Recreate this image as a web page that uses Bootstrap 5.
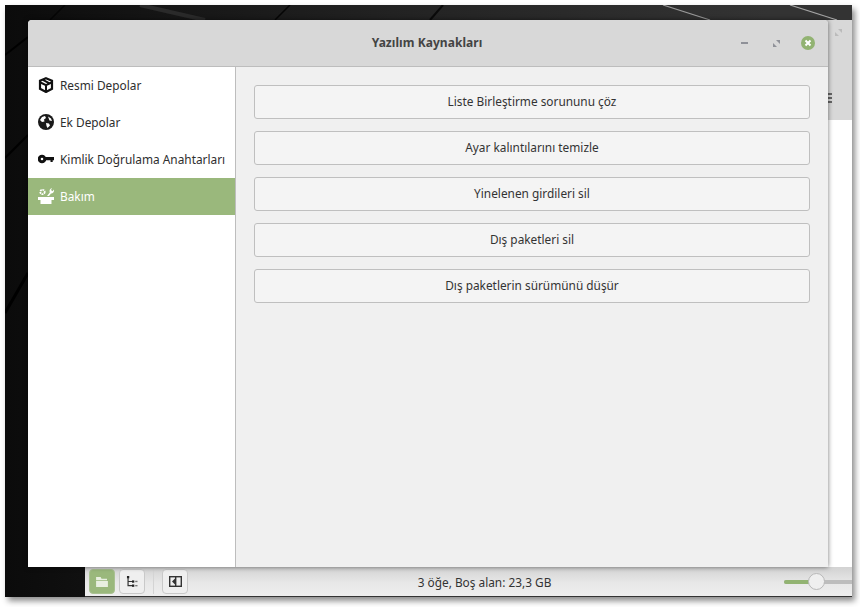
<!DOCTYPE html>
<html lang="tr">
<head>
<meta charset="utf-8">
<title>Yazılım Kaynakları</title>
<link href="https://cdn.jsdelivr.net/npm/bootstrap@5.3.0/dist/css/bootstrap.min.css" rel="stylesheet">
<style>
html,body{margin:0;background:#fff;height:100%;overflow:hidden}
body{font-family:"Noto Sans","Open Sans",sans-serif;font-size:11.85px;color:#2e2e2e}
.desk{position:absolute;left:5px;top:5px;width:847px;height:592px;background:linear-gradient(90deg,#0b0b0b 0,#161616 20%,#242424 50%,#333 90%);box-shadow:3px 4px 6px rgba(0,0,0,.45);overflow:hidden}
.desk-streak{position:absolute;left:0;top:0;width:847px;height:592px}
.fm{position:absolute;left:80px;top:15px;width:767px;height:577px;background:#fff}
.fm-head{height:100px;background:#d8d8d8}
.fm-edge{position:absolute;left:0;right:0;bottom:0;height:30px;background:linear-gradient(#d2d2d2,#e8e8e8 55%,#eeeeee);display:flex;align-items:center;padding-left:4px;border-bottom:1px solid #333}
.tool{width:26px;height:25px;border:1px solid #c9c9c9;border-radius:4px;background:#efefef;display:flex;align-items:center;justify-content:center;margin-right:4px}
.tool-on{background:#9ab87c;border-color:#a9c191}
.tool-sep{width:1px;height:25px;background:#d4d4d4;margin:0 8px 0 4px}
.fm-status{position:absolute;left:0;width:799px;text-align:center;font-size:11.85px;color:#333;top:7px}
.zoomtrack{position:absolute;left:699px;top:13px;right:0;height:4px;background:#bdbdbd;border-radius:2px 0 0 2px}
.zoomfill{position:absolute;left:0;top:0;width:26px;height:4px;background:#92b372;border-radius:2px 0 0 2px}
.zoomknob{position:absolute;left:24px;top:-7px;width:17px;height:17px;border-radius:50%;background:#efefef;border:1px solid #b8b8b8}
.ghost-ctl{position:absolute;left:750px;top:9px}
.hamb{position:absolute;left:742px;top:73px;width:5px;height:10px;border-top:2px solid #666;border-bottom:2px solid #666}
.hamb::after{content:"";display:block;height:2px;background:#666;margin-top:2px}
.win{position:absolute;left:28px;top:20px;width:800px;height:547px;background:#f0f0f0;border-radius:4px 4px 0 0;box-shadow:0 0 5px rgba(0,0,0,.55);overflow:hidden;display:flex;flex-direction:column}
.win-title{height:47px;flex:none;background:#d8d8d8;border-bottom:1px solid #bdbdbd;position:relative;display:flex;align-items:center;justify-content:center;padding-right:2px;font-weight:700;font-size:12px;color:#444;letter-spacing:.05px}
.win-ctl{position:absolute;top:16px;display:flex;align-items:center;justify-content:center;width:14px;height:14px}
.win-body{flex:1;display:flex;min-height:0}
.side{width:208px;flex:none;background:#fff;border-right:1px solid #bdbdbd}
.side-item{height:37px;display:flex;align-items:center;padding-left:10px;padding-top:1px;color:#2e2e2e;white-space:nowrap}
.side-item svg{width:16px;height:16px;flex:none;margin-right:6px;margin-top:-2px}
.side-on{background:#9ab87c;color:#fff}
.pane{flex:1;padding:18px 18px 0 18px;display:flex;flex-direction:column;gap:12px}
.act{height:34px;border:1px solid #bfbfbf;border-radius:3px;background:#f4f4f4;color:#333;font-size:11.85px;padding:0;line-height:1}
.act:hover{background:#f4f4f4;color:#333;border-color:#bfbfbf}
</style>
</head>
<body>
<div class="desk">
  <svg class="desk-streak" viewBox="0 0 847 592" aria-hidden="true">
    <path d="M45 15 L60 0" stroke="#050505" stroke-width="1.500" fill="none"/>
    <path d="M135 0 L200 15" stroke="#2a2a2a" stroke-width="4" fill="none"/>
    <path d="M270 15 L285 0" stroke="#050505" stroke-width="1.500" fill="none"/>
    <path d="M425 15 L438 0" stroke="#0a0a0a" stroke-width="2" fill="none"/>
    <path d="M658 0 L705 15" stroke="#999" stroke-width="1.200" fill="none"/>
    <path d="M785 0 L832 15" stroke="#a5a5a5" stroke-width="1.200" fill="none"/>
    <path d="M0 50 L23 32" stroke="#000" stroke-width="2" fill="none"/>
    <path d="M0 153 L23 130" stroke="#000" stroke-width="2" fill="none"/>
    <path d="M0 308 L23 268" stroke="#000" stroke-width="3" fill="none"/>
  </svg>
  <div class="fm">
    <div class="fm-head"></div>
    <div class="hamb"></div>
    <svg class="ghost-ctl" width="7" height="7" viewBox="0 0 7 7" aria-hidden="true"><path d="M0 7V3L4 7ZM3 0H7V4Z" fill="#bbb"/></svg>
    <div class="fm-edge">
      <div class="tool tool-on"><svg width="12" height="10" viewBox="0 0 13 11"><path d="M0 0H5L6 2H12V3.500H0ZM0 4.500H13V11H0Z" fill="#e8efe0"/></svg></div>
      <div class="tool"><svg width="12" height="11" viewBox="0 0 13 12"><rect x="1" y="0" width="2.500" height="2.500" fill="#222"/><path d="M2.200 2V10.500H7M2.200 6H7" stroke="#333" stroke-width="1.300" fill="none"/><rect x="6.500" y="4.800" width="2.500" height="2.500" fill="#222"/><rect x="10" y="5.200" width="2.500" height="1.500" fill="#777"/><rect x="6.500" y="9.300" width="2.500" height="2.500" fill="#222"/><rect x="10" y="9.800" width="2.500" height="1.500" fill="#777"/></svg></div>
      <div class="tool-sep"></div>
      <div class="tool"><svg width="13" height="11" viewBox="0 0 13 11"><rect x=".7" y=".7" width="11.600" height="9.600" fill="none" stroke="#333" stroke-width="1.400"/><path d="M6 2.500V8.500L3 5.500Z" fill="#333"/><rect x="6" y="1" width="1.400" height="9" fill="#333"/></svg></div>
      <div class="fm-status">3 öğe, Boş alan: 23,3 GB</div>
      <div class="zoomtrack"><div class="zoomfill"></div><div class="zoomknob"></div></div>
    </div>
  </div>
</div>
<div class="win">
  <div class="win-title">Yazılım Kaynakları
    <span class="win-ctl" style="left:709px"><svg width="7" height="2"><rect width="7" height="2" fill="#8f9198"/></svg></span>
    <span class="win-ctl" style="left:741px"><svg width="7" height="7" viewBox="0 0 7 7"><path d="M0 7V3L4 7ZM3 0H7V4Z" fill="#8f9198"/></svg></span>
    <span class="win-ctl" style="left:773px"><svg width="14" height="14" viewBox="0 0 14 14"><circle cx="7" cy="7" r="7" fill="#92b372"/><path d="M4.500 4.500L9.500 9.500M9.500 4.500L4.500 9.500" stroke="#fff" stroke-width="2"/></svg></span>
  </div>
  <div class="win-body">
    <div class="side">
      <div class="side-item"><svg viewBox="0 0 16 16"><path d="M8 1.200L14 3.700V11.800L8 15L2 11.800V3.700Z" fill="none" stroke="#111" stroke-width="2.200"/><path d="M2.500 5.500L8 8.200L13.500 5.500M8 8V14.500M5 2.800L10.500 5.800V7.500" fill="none" stroke="#111" stroke-width="2"/></svg>Resmi Depolar</div>
      <div class="side-item"><svg viewBox="0 0 16 16"><circle cx="8" cy="8" r="8" fill="#1a1a1a"/><path d="M4 3L7 2L8 4L6 5.500L6.500 7.500L4 8L2 6ZM8 9L11 9.500L12 11.500L9.500 14L8.500 12ZM10 2.500L13 4.500L14 7L11.500 6.500Z" fill="#fff"/></svg>Ek Depolar</div>
      <div class="side-item"><svg viewBox="0 0 16 16"><circle cx="4" cy="8" r="2.800" fill="none" stroke="#111" stroke-width="3"/><path d="M6 6H16V9.300H14.700V11H12.500V9.300H6Z" fill="#111"/></svg>Kimlik Doğrulama Anahtarları</div>
      <div class="side-item side-on"><svg viewBox="0 0 16 16"><path d="M0 9H16V12H13.500V16H2.500V12H0Z" fill="#fff"/><circle cx="4.500" cy="4" r="2.200" fill="none" stroke="#fff" stroke-width="1.800" stroke-dasharray="1.700 .6"/><path d="M9 8L11.800 4.500C11 2.500 12 .5 14 0L13 2L14.500 3.300L16 1.500C16.500 4 14.500 6 13 5.500L11 8Z" fill="#fff"/></svg>Bakım</div>
    </div>
    <div class="pane">
      <button type="button" class="btn act">Liste Birleştirme sorununu çöz</button>
      <button type="button" class="btn act">Ayar kalıntılarını temizle</button>
      <button type="button" class="btn act">Yinelenen girdileri sil</button>
      <button type="button" class="btn act">Dış paketleri sil</button>
      <button type="button" class="btn act">Dış paketlerin sürümünü düşür</button>
    </div>
  </div>
</div>
<script src="https://cdn.jsdelivr.net/npm/bootstrap@5.3.0/dist/js/bootstrap.bundle.min.js"></script>
</body>
</html>
